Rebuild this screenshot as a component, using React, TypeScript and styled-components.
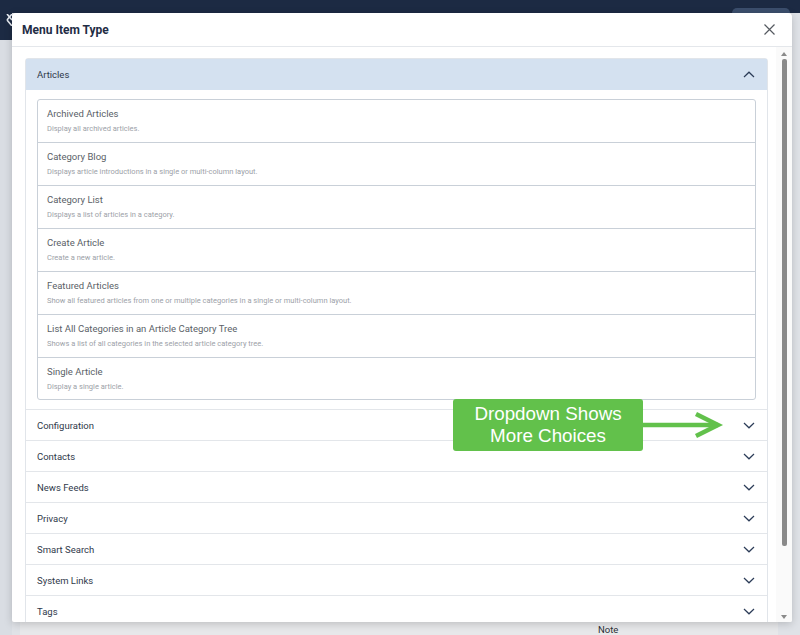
import React from "react";
import styled, { createGlobalStyle } from "styled-components";

const GlobalStyle = createGlobalStyle`
  html, body { margin: 0; padding: 0; }
  body { font-family: Roboto, "Liberation Sans", Arial, sans-serif; overflow: hidden; }
  * { box-sizing: border-box; }
`;

const Page = styled.div`
  position: relative;
  width: 800px;
  height: 635px;
  overflow: hidden;
  background: #d9dde3;
  display: flex;
  flex-direction: column;
`;

const TopBar = styled.div`
  height: 13px;
  background: #1c2a43;
  display: flex;
  justify-content: flex-end;
  align-items: flex-end;
  padding-right: 10px;
  flex-shrink: 0;
`;

const TopButton = styled.div`
  width: 58px;
  height: 5px;
  background: #3b4e6c;
  border-radius: 6px 6px 0 0;
`;

const Below = styled.div`
  flex: 1;
  display: flex;
`;

const Sidebar = styled.div`
  width: 12px;
  display: flex;
  flex-direction: column;
`;

const SidebarTop = styled.div`
  height: 27px;
  background: #1c2a43;
  display: flex;
  align-items: flex-start;
  justify-content: flex-end;
  padding-top: 1px;
`;

const Main = styled.div`
  flex: 1;
  display: flex;
  padding: 0 22px 0 8px;
  background: #dfe2e7;
`;

const Panel = styled.div`
  flex: 1;
  background: #e7e8ea;
  display: flex;
  align-items: flex-end;
  padding-left: 578px;
`;

const NoteLabel = styled.span`
  font-size: 9.5px;
  line-height: 11px;
  color: #2a2f36;
`;

const Modal = styled.div`
  position: absolute;
  left: 12px;
  top: 13px;
  width: 780px;
  height: 609px;
  background: #fff;
  border-radius: 4px 4px 2px 2px;
  box-shadow: 0 2px 8px rgba(0, 0, 0, 0.18);
  display: flex;
  flex-direction: column;
  overflow: hidden;
`;

const ModalHeader = styled.div`
  height: 34px;
  flex-shrink: 0;
  border-bottom: 1px solid #e4e7eb;
  display: flex;
  align-items: center;
  justify-content: space-between;
  padding: 0 17px 0 10px;
`;

const Title = styled.h2`
  margin: 0;
  font-size: 12px;
  font-weight: 700;
  color: #1f2d45;
`;

const CloseButton = styled.button`
  border: 0;
  background: none;
  padding: 0;
  width: 12px;
  height: 12px;
  display: flex;
  align-items: center;
  justify-content: center;
`;

const ModalBody = styled.div`
  flex: 1;
  display: flex;
  min-height: 0;
`;

const Content = styled.div`
  flex: 1;
  padding: 11px 8px 0 13px;
  overflow: hidden;
`;

const ScrollBar = styled.div`
  width: 16px;
  display: flex;
  flex-direction: column;
  align-items: center;
  padding: 5px 0 3px;
  background: #fafafa;
`;

const Thumb = styled.div`
  width: 5px;
  height: 487px;
  margin-top: 3px;
  background: #8a8a8a;
  border-radius: 2px;
`;

const Spacer = styled.div`
  flex: 1;
`;

const Accordion = styled.div`
  border: 1px solid #e1e5ea;
  border-radius: 3px;
  background: #fff;
`;

const SectionHeader = styled.div<{ $open?: boolean; $first?: boolean }>`
  height: 31px;
  display: flex;
  align-items: center;
  justify-content: space-between;
  padding: 0 12px 0 11px;
  background: ${(p) => (p.$open ? "#d4e1f0" : "#fff")};
  border-top: ${(p) => (p.$first ? "none" : "1px solid #e3e6ea")};
  font-size: 9.5px;
  color: #30394a;
`;

const SectionBody = styled.div`
  padding: 9px 11px 9px 11px;
`;

const List = styled.div`
  border: 1px solid #c9d0d8;
  border-radius: 3px;
`;

const Item = styled.div<{ $last?: boolean }>`
  height: ${(p) => (p.$last ? 41 : 43)}px;
  padding: 8px 9px 0;
  border-bottom: ${(p) => (p.$last ? "none" : "1px solid #c9d0d8")};
  display: flex;
  flex-direction: column;
`;

const ItemTitle = styled.div`
  font-size: 9.5px;
  line-height: 12px;
  color: #5a5f67;
`;

const ItemDesc = styled.div`
  font-size: 7.5px;
  line-height: 10px;
  margin-top: 4px;
  color: #9ca1a8;
`;

const Callout = styled.div`
  position: absolute;
  left: 453px;
  top: 399px;
  width: 190px;
  height: 52px;
  background: #62c14b;
  border-radius: 3px;
  color: #fff;
  font-family: "Liberation Sans", Arial, sans-serif;
  font-size: 18.8px;
  line-height: 22px;
  text-align: center;
  display: flex;
  flex-direction: column;
  justify-content: center;
`;

const ArrowSvg = styled.svg`
  position: absolute;
  left: 640px;
  top: 410px;
`;

const Chevron = ({ up }: { up?: boolean }) => (
  <svg width="12" height="7" viewBox="0 0 12 7">
    <polyline
      points={up ? "1,6 6,1.2 11,6" : "1,1 6,5.8 11,1"}
      fill="none"
      stroke="#2c3c58"
      strokeWidth="1.2"
    />
  </svg>
);

const items = [
  ["Archived Articles", "Display all archived articles."],
  ["Category Blog", "Displays article introductions in a single or multi-column layout."],
  ["Category List", "Displays a list of articles in a category."],
  ["Create Article", "Create a new article."],
  ["Featured Articles", "Show all featured articles from one or multiple categories in a single or multi-column layout."],
  ["List All Categories in an Article Category Tree", "Shows a list of all categories in the selected article category tree."],
  ["Single Article", "Display a single article."],
];

const sections = [
  "Configuration",
  "Contacts",
  "News Feeds",
  "Privacy",
  "Smart Search",
  "System Links",
  "Tags",
];

export default function App() {
  return (
    <>
      <GlobalStyle />
      <Page>
        <TopBar>
          <TopButton />
        </TopBar>
        <Below>
          <Sidebar>
            <SidebarTop>
              <svg width="6" height="12" viewBox="0 0 6 12">
                <path d="M1 0 L6 6 M6 0 L1 6 M1 6 L6 12" stroke="#e8ecf2" strokeWidth="1.6" fill="none" />
              </svg>
            </SidebarTop>
          </Sidebar>
          <Main>
            <Panel>
              <NoteLabel>Note</NoteLabel>
            </Panel>
          </Main>
        </Below>

        <Modal>
          <ModalHeader>
            <Title>Menu Item Type</Title>
            <CloseButton aria-label="Close">
              <svg width="11" height="11" viewBox="0 0 11 11">
                <path d="M0.5 0.5 L10.5 10.5 M10.5 0.5 L0.5 10.5" stroke="#555a60" strokeWidth="1.2" />
              </svg>
            </CloseButton>
          </ModalHeader>
          <ModalBody>
            <Content>
              <Accordion>
                <SectionHeader $open $first>
                  <span>Articles</span>
                  <Chevron up />
                </SectionHeader>
                <SectionBody>
                  <List>
                    {items.map(([t, d], i) => (
                      <Item key={t} $last={i === items.length - 1}>
                        <ItemTitle>{t}</ItemTitle>
                        <ItemDesc>{d}</ItemDesc>
                      </Item>
                    ))}
                  </List>
                </SectionBody>
                {sections.map((s) => (
                  <SectionHeader key={s}>
                    <span>{s}</span>
                    <Chevron />
                  </SectionHeader>
                ))}
              </Accordion>
            </Content>
            <ScrollBar>
              <svg width="6" height="4" viewBox="0 0 6 4">
                <polygon points="0,4 3,0 6,4" fill="#8a8a8a" />
              </svg>
              <Thumb />
              <Spacer />
              <svg width="6" height="4" viewBox="0 0 6 4">
                <polygon points="0,0 3,4 6,0" fill="#8a8a8a" />
              </svg>
            </ScrollBar>
          </ModalBody>
        </Modal>

        <Callout>
          <span>Dropdown Shows</span>
          <span>More Choices</span>
        </Callout>
        <ArrowSvg width="84" height="32" viewBox="0 0 84 32">
          <line x1="0" y1="15" x2="78" y2="15" stroke="#62c14b" strokeWidth="4.5" />
          <polyline points="56,4 78,15 56,26" fill="none" stroke="#62c14b" strokeWidth="4.5" strokeLinejoin="miter" />
        </ArrowSvg>
      </Page>
    </>
  );
}
